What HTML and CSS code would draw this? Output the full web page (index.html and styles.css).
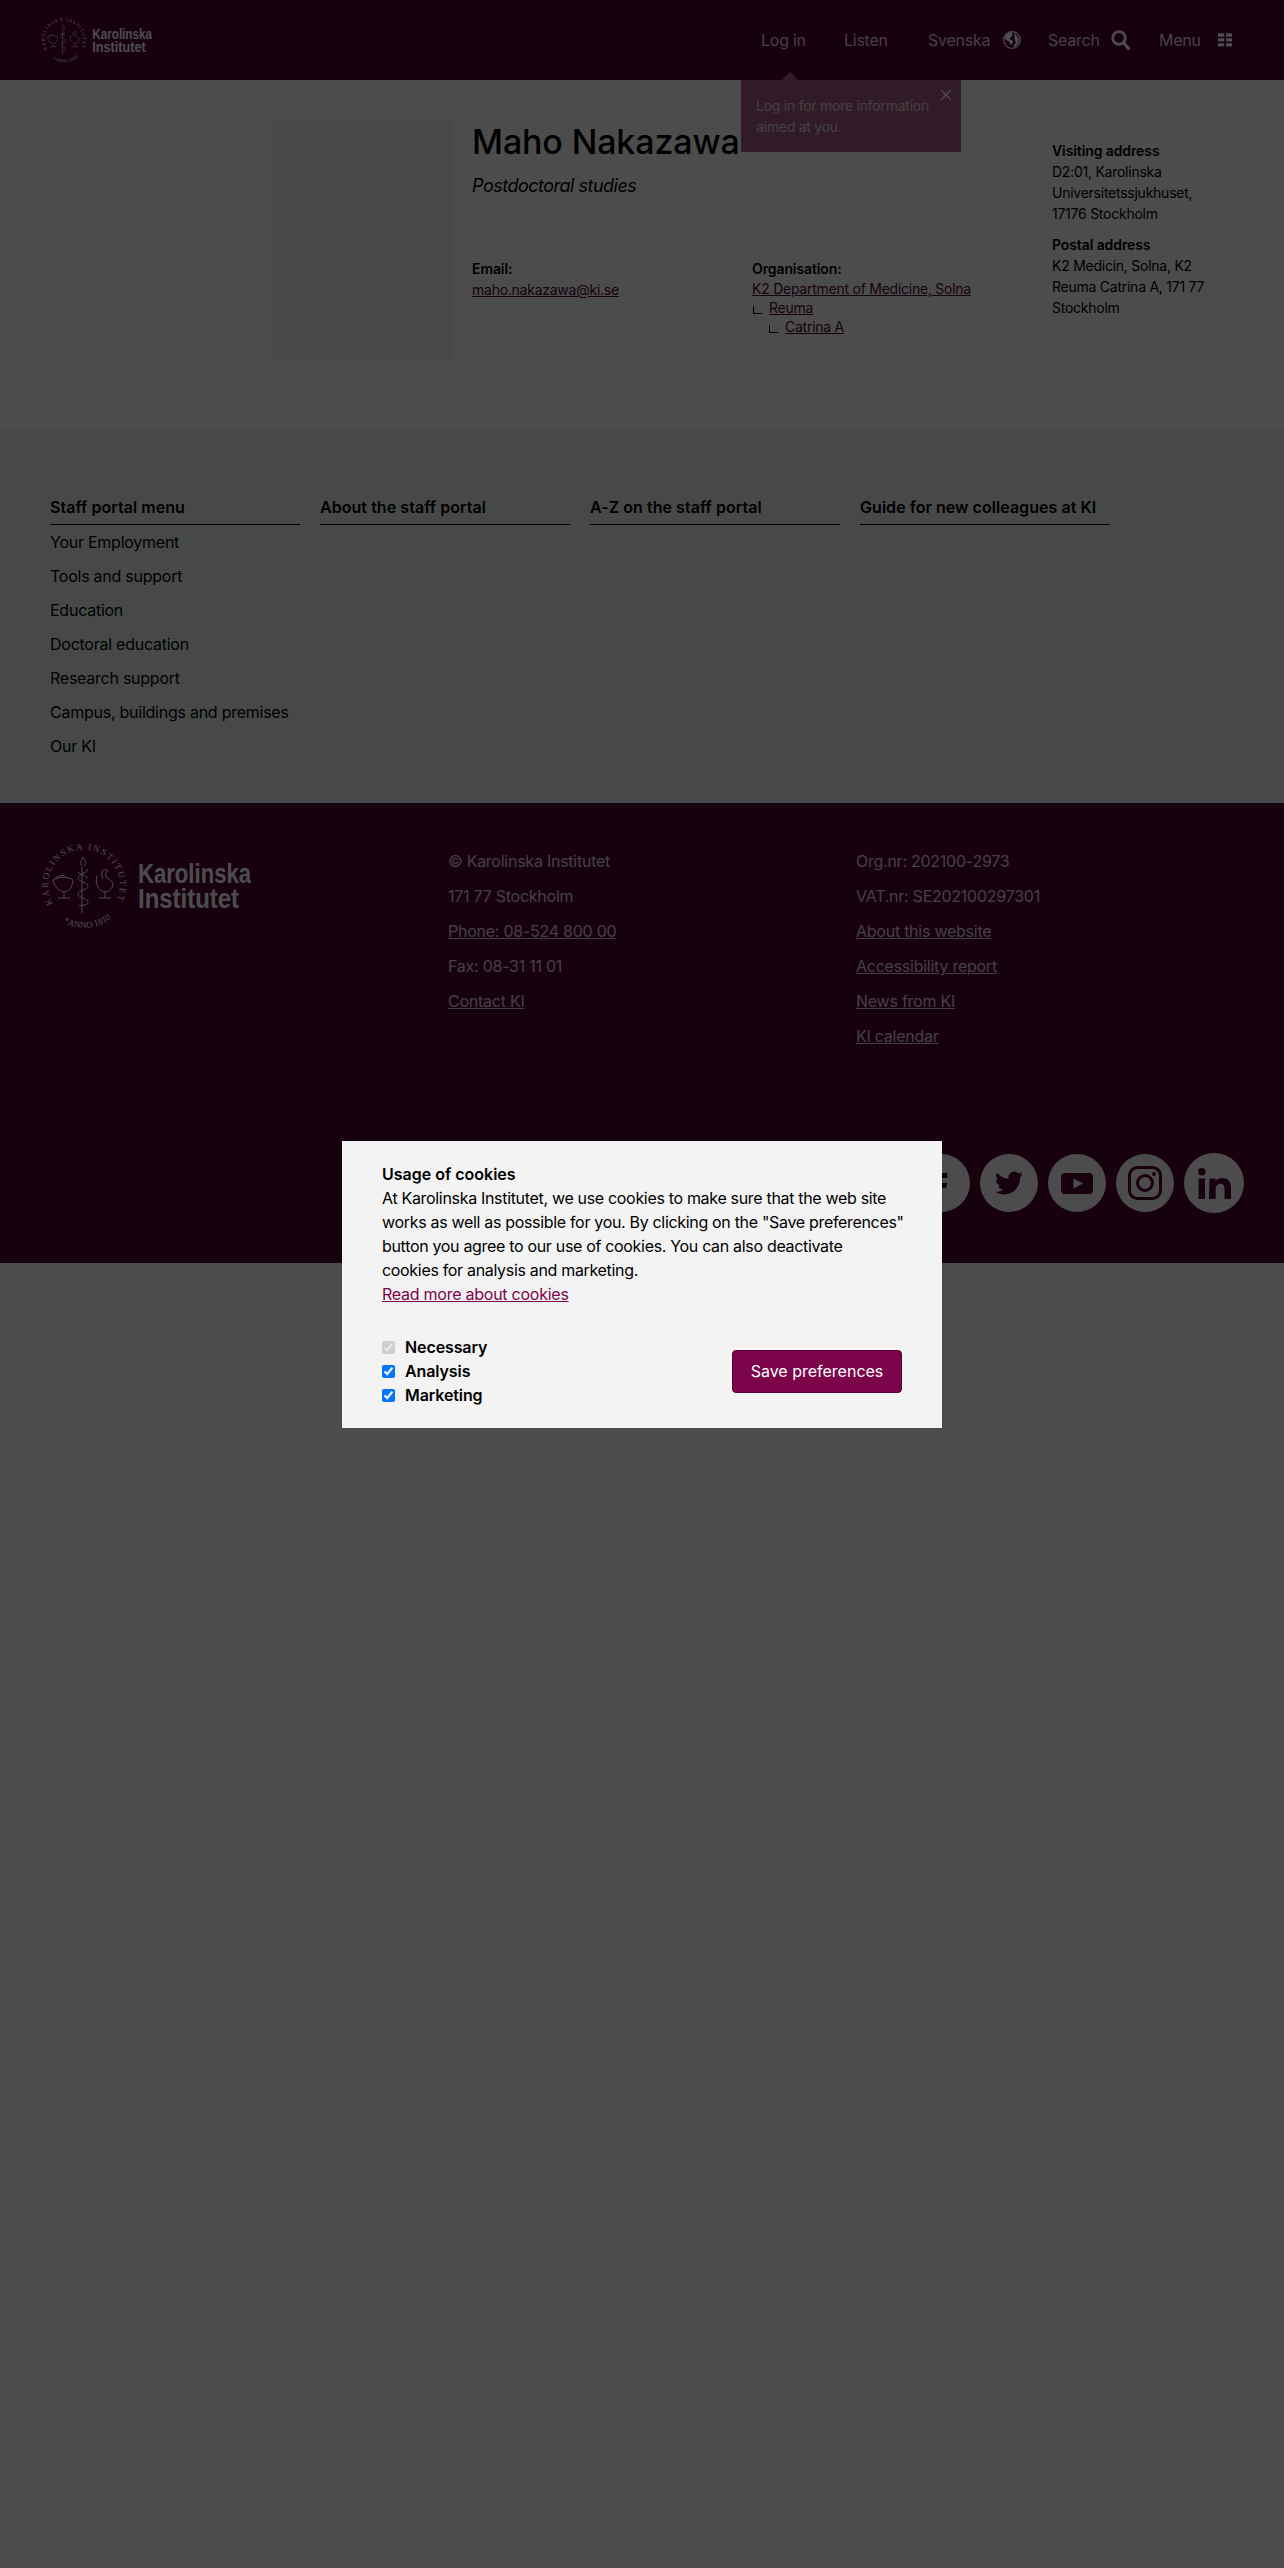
FILE: index.html
```html
<!DOCTYPE html>
<html lang="en">
<head>
<meta charset="utf-8">
<title>Maho Nakazawa</title>
<link rel="stylesheet" href="styles.css">
</head>
<body>
<svg class="defs" width="0" height="0" aria-hidden="true">
  <defs>
    <symbol id="ki-logo" viewBox="0 0 210 87">
      <path id="seal-top" d="M11.800 61.500A36 36 0 1 1 74.200 61.500" fill="none"/>
      <path id="seal-bottom" d="M15.700 76A42.500 42.500 0 0 0 70.300 76" fill="none"/>
      <text class="seal-text"><textPath href="#seal-top" textLength="146" lengthAdjust="spacing">KAROLINSKA INSTITUTET</textPath></text>
      <text class="seal-text"><textPath href="#seal-bottom" startOffset="8">*ANNO 1810*</textPath></text>
      <g class="seal-art">
        <path d="M41 71V25M41 24c-3-3 0-6 1-9 2 3 4 6 1 9"/>
        <path d="M46 27c3 3-9 5-9 9s10 4 10 8-10 4-10 8 10 4 10 8-7 3-9 4M37 30c2 3 9 3 9 6"/>
        <path d="M12 38c6-4 17-3 20 0-1 9-4 11-9 12-5-1-9-4-11-12zM23 50v6M17 56h12M14 36c3-2 6-3 10-2"/>
        <path d="M64 50v6M58 56h12M56 34c-2 8 1 15 8 16 6-1 8-5 8-9-2-3-5-4-7-6-1-2 0-5 2-6-2-2-5-2-6 1-1 3 0 5 1 7"/>
      </g>
      <text class="word" x="97" y="41" textLength="113" lengthAdjust="spacingAndGlyphs">Karolinska</text>
      <text class="word" x="97" y="66" textLength="101" lengthAdjust="spacingAndGlyphs">Institutet</text>
    </symbol>
  </defs>
</svg>

<header class="site-header">
  <svg class="logo-small"><use href="#ki-logo"/></svg>
  <nav class="top-nav">
    <a class="nav-item">Log in</a>
    <a class="nav-item">Listen</a>
    <a class="nav-item nav-gap-globe">Svenska
      <svg class="icon-globe" viewBox="0 0 18 18"><circle cx="9" cy="9" r="8.300" fill="none" stroke="#fff" stroke-width="1.200"/><path fill="#fff" d="M9 1C5 1.500 2 4 1.500 7c1 2 3 2.500 4.500 3.500 1 1 1 2.500 1.500 3.500 1.500-.5 2-2 2.500-3 .5-1.500-1.500-2-3-2.500-.5-1-.5-1.500 .5-2 1-1 1.500-2 2-3 0-1-.2-2-.5-2.500zM11.500 1.500c.5 1.500 1.500 2 2.500 3.500l2 3c0 3-1 5-3 7-1 .5-1.500 1-2.500 1.500-.5-1.500 1-3 2-4 .5-2-1-3.500-1-5.500 0-2-.5-4 0-5.500z"/></svg>
    </a>
    <a class="nav-item nav-gap-search">Search
      <svg class="icon-search" viewBox="0 0 19 20"><circle cx="8" cy="8" r="6.300" fill="none" stroke="#fff" stroke-width="2.800"/><path d="M12.500 12.500l5 6" stroke="#fff" stroke-width="3.200" stroke-linecap="round"/></svg>
    </a>
    <a class="nav-item nav-gap-menu">Menu
      <svg class="icon-menu" viewBox="0 0 15 14"><path fill="#fff" d="M0 0h6.500v3.500H0zM8.500 0H15v3.500H8.500zM0 5.200h6.500v3.500H0zM8.500 5.200H15v3.500H8.500zM0 10.400h6.500v3.500H0zM8.500 10.400H15v3.500H8.500z"/></svg>
    </a>
  </nav>
  <div class="login-tip">
    <span class="tip-arrow"></span>
    <svg class="tip-close" viewBox="0 0 12 12"><path d="M1 1l10 10M11 1L1 11" stroke="#fff" stroke-width="1.300"/></svg>
    Log in for more information<br>aimed at you.
  </div>
</header>

<main class="profile">
  <div class="photo"></div>
  <div class="person">
    <h1 class="name">Maho Nakazawa</h1>
    <p class="role">Postdoctoral studies</p>
    <div class="facts">
      <div class="fact-email">
        <div class="label">Email:</div>
        <a class="plum-link" href="#">maho.nakazawa@ki.se</a>
      </div>
      <div class="fact-org">
        <div class="label">Organisation:</div>
        <div class="org-line"><a class="plum-link" href="#">K2 Department of Medicine, Solna</a></div>
        <div class="org-line"><span class="tree"></span><a class="plum-link" href="#">Reuma</a></div>
        <div class="org-line org-deep"><span class="tree"></span><a class="plum-link" href="#">Catrina A</a></div>
      </div>
    </div>
  </div>
  <aside class="addresses">
    <div class="label">Visiting address</div>
    <p class="address">D2:01, Karolinska<br>Universitetssjukhuset,<br>17176 Stockholm</p>
    <div class="label">Postal address</div>
    <p class="address">K2 Medicin, Solna, K2<br>Reuma Catrina A, 171 77<br>Stockholm</p>
  </aside>
</main>

<section class="portal-links">
  <div class="portal-col">
    <h2 class="portal-title">Staff portal menu</h2>
    <ul class="portal-list">
      <li>Your Employment</li>
      <li>Tools and support</li>
      <li>Education</li>
      <li>Doctoral education</li>
      <li>Research support</li>
      <li>Campus, buildings and premises</li>
      <li>Our KI</li>
    </ul>
  </div>
  <div class="portal-col"><h2 class="portal-title">About the staff portal</h2></div>
  <div class="portal-col"><h2 class="portal-title">A-Z on the staff portal</h2></div>
  <div class="portal-col"><h2 class="portal-title">Guide for new colleagues at KI</h2></div>
</section>

<footer class="site-footer">
  <div class="footer-grid">
    <svg class="logo-large"><use href="#ki-logo"/></svg>
    <ul class="footer-list">
      <li>© Karolinska Institutet</li>
      <li>171 77 Stockholm</li>
      <li><a href="#">Phone: 08-524 800 00</a></li>
      <li>Fax: 08-31 11 01</li>
      <li><a href="#">Contact KI</a></li>
    </ul>
    <ul class="footer-list">
      <li>Org.nr: 202100-2973</li>
      <li>VAT.nr: SE202100297301</li>
      <li><a href="#">About this website</a></li>
      <li><a href="#">Accessibility report</a></li>
      <li><a href="#">News from KI</a></li>
      <li><a href="#">KI calendar</a></li>
    </ul>
  </div>
  <div class="social">
    <span class="social-disc"><svg class="icon-fb" viewBox="0 0 24 24"><path d="M14 8h3V4h-3c-3 0-5 2-5 5v3H6v4h3v8h4v-8h3l1-4h-4V9c0-.6.4-1 1-1z"/></svg></span>
    <span class="social-disc"><svg class="icon-tw" viewBox="0 0 24 24"><path d="M23.953 4.57a10 10 0 01-2.825.775 4.958 4.958 0 002.163-2.723c-.951.555-2.005.959-3.127 1.184a4.92 4.92 0 00-8.384 4.482C7.69 8.095 4.067 6.13 1.64 3.162a4.822 4.822 0 00-.666 2.475c0 1.71.87 3.213 2.188 4.096a4.904 4.904 0 01-2.228-.616v.06a4.923 4.923 0 003.946 4.827 4.996 4.996 0 01-2.212.085 4.936 4.936 0 004.604 3.417 9.867 9.867 0 01-6.102 2.105c-.39 0-.779-.023-1.17-.067a13.995 13.995 0 007.557 2.209c9.053 0 13.998-7.496 13.998-13.985 0-.21 0-.42-.015-.63A9.935 9.935 0 0024 4.59z"/></svg></span>
    <span class="social-disc"><svg class="icon-yt" viewBox="0 0 32 21"><path fill-rule="evenodd" d="M4 0h24a4 4 0 014 4v13a4 4 0 01-4 4H4a4 4 0 01-4-4V4a4 4 0 014-4zM12.500 5.500v10l9.500-5z"/></svg></span>
    <span class="social-disc"><svg class="icon-ig" viewBox="0 0 34 34"><rect x="1.500" y="1.500" width="31" height="31" rx="8" fill="none" stroke-width="3"/><circle cx="17" cy="17" r="7.500" fill="none" stroke-width="3"/><circle class="ig-dot" cx="26" cy="8" r="2"/></svg></span>
    <span class="social-disc social-disc-wide"><svg class="icon-in" viewBox="0 0 33 31"><circle cx="3.800" cy="3.800" r="3.800"/><path d="M.6 10.500h6.400V31H.6zM11.500 10.500h6v2.800c1-1.800 3.300-3.300 6.500-3.300 6.500 0 9 3.800 9 10.300V31h-6.500V21.200c0-2.700-.7-5.400-3.800-5.400s-5 2.300-5 5.500V31h-6.700z"/></svg></span>
  </div>
</footer>

<div class="overlay"></div>

<div class="cookie-modal">
  <strong class="cookie-title">Usage of cookies</strong>
  <p class="cookie-text">At Karolinska Institutet, we use cookies to make sure that the web site<br>works as well as possible for you. By clicking on the "Save preferences"<br>button you agree to our use of cookies. You can also deactivate<br>cookies for analysis and marketing.</p>
  <a class="cookie-more" href="#">Read more about cookies</a>
  <div class="cookie-controls">
    <div class="cookie-options">
      <label class="cookie-option"><input type="checkbox" checked disabled>Necessary</label>
      <label class="cookie-option"><input type="checkbox" checked>Analysis</label>
      <label class="cookie-option"><input type="checkbox" checked>Marketing</label>
    </div>
    <button class="save-btn" type="button">Save preferences</button>
  </div>
</div>
</body>
</html>
```
FILE: styles.css
```css
* { box-sizing: border-box; }
html, body { margin: 0; padding: 0; }
body {
  min-height: 2568px;
  background: #fff;
  color: #000;
  font-family: Inter, "Noto Sans", sans-serif;
  font-size: 16px;
  line-height: 24px;
  letter-spacing: -.25px;
  position: relative;
}
a { color: inherit; }
ul { list-style: none; margin: 0; padding: 0; }
p { margin: 0; }
.defs { position: absolute; }
.seal-text { font-family: "Liberation Serif", serif; font-size: 9px; letter-spacing: 0; fill: #fff; }
.seal-art { fill: none; stroke: #fff; stroke-width: 1; }
.word { font-family: "Liberation Sans Narrow", "Liberation Sans", sans-serif; font-weight: 700; font-size: 28px; letter-spacing: 0; fill: #fff; }

.site-header {
  position: relative;
  height: 80px;
  background: #4f0433;
  color: #fff;
  display: flex;
  align-items: center;
  padding: 0 52px 0 41px;
}
.logo-small { width: 111px; height: 46px; }
.top-nav {
  margin-left: auto;
  display: grid;
  grid-template-columns: 83px 84px 120px 111px 73px;
}
.nav-item { display: flex; align-items: center; white-space: nowrap; color: rgba(255, 255, 255, .85); }
.nav-gap-globe { gap: 13px; }
.nav-gap-search { gap: 11px; }
.nav-gap-menu { gap: 17px; }
.icon-globe { width: 18px; height: 18px; }
.icon-search { width: 19px; height: 20px; }
.icon-menu { width: 15px; height: 14px; }
.login-tip {
  position: absolute;
  top: 80px;
  left: 741px;
  width: 220px;
  height: 72px;
  padding: 15px;
  background: #a05d7f;
  color: rgba(255, 255, 255, .75);
  font-size: 14px;
  line-height: 21px;
  z-index: 2;
}
.tip-arrow {
  position: absolute;
  top: -8px;
  left: 41px;
  border-left: 8px solid transparent;
  border-right: 8px solid transparent;
  border-bottom: 8px solid #a05d7f;
}
.tip-close { position: absolute; top: 9px; right: 9px; width: 12px; height: 12px; }

.profile {
  height: 350px;
  padding: 40px 0 0 272px;
  display: grid;
  grid-template-columns: 180px 560px 180px;
  column-gap: 20px;
  align-items: start;
}
.photo { height: 240px; background: #f1f1f1; }
.name { margin: -2px 0 0; font-size: 34px; line-height: 48px; font-weight: 500; letter-spacing: -.15px; white-space: nowrap; }
.role { margin-top: 6px; font-size: 18px; line-height: 27px; font-style: italic; letter-spacing: -.5px; }
.facts { margin-top: 59px; display: grid; grid-template-columns: 280px 280px; font-size: 14px; line-height: 21px; }
.label { font-size: 14px; line-height: 21px; font-weight: 600; letter-spacing: -.1px; }
.plum-link { color: #4f0433; }
.org-line { line-height: 19px; display: flex; align-items: center; }
.org-deep { padding-left: 16px; }
.tree {
  width: 9px;
  height: 8px;
  margin: 4px 7px 0 1px;
  border-left: 1px solid #000;
  border-bottom: 1px solid #000;
}
.addresses { margin-top: 20px; font-size: 14px; line-height: 21px; }
.address { margin-bottom: 10px; }

.portal-links {
  height: 373px;
  background: #edf4f4;
  padding: 65px 0 0 50px;
  display: grid;
  grid-template-columns: repeat(4, 250px);
  column-gap: 20px;
  align-items: start;
}
.portal-title {
  margin: 0;
  font-size: 16px;
  line-height: 24px;
  font-weight: 600;
  letter-spacing: .05px;
  padding-bottom: 5px;
  border-bottom: 1px solid #000;
}
.portal-list li { line-height: 34px; }

.site-footer {
  height: 460px;
  background: #4f0433;
  color: rgba(255, 255, 255, .85);
  padding: 39px 40px 0 41px;
}
.footer-grid { display: grid; grid-template-columns: 407px 408px 1fr; }
.logo-large { width: 210px; height: 87px; }
.footer-list { padding-top: 7px; }
.footer-list li { line-height: 24px; margin-bottom: 11px; }
.social {
  margin-top: 94px;
  display: flex;
  justify-content: flex-end;
  align-items: center;
  gap: 10px;
}
.social-disc {
  width: 58px;
  height: 58px;
  border-radius: 50%;
  background: #fff;
  display: flex;
  align-items: center;
  justify-content: center;
  fill: #4f0433;
  stroke: #4f0433;
  stroke-width: 0;
}
.social-disc-wide { width: 60px; height: 60px; }
.icon-fb { width: 30px; height: 30px; }
.icon-tw { width: 28px; height: 28px; }
.icon-yt { width: 32px; height: 21px; }
.icon-ig { width: 34px; height: 34px; }
.ig-dot { stroke: none; }
.icon-in { width: 33px; height: 31px; }

.overlay {
  position: fixed;
  inset: 0;
  background: rgba(0, 0, 0, .7);
  z-index: 10;
}
.cookie-modal {
  position: fixed;
  left: 342px;
  top: 1141px;
  width: 600px;
  height: 287px;
  padding: 21px 40px;
  background: #f3f3f3;
  color: #000;
  z-index: 11;
}
.cookie-title { display: block; font-weight: 600; letter-spacing: 0; }
.cookie-text { white-space: nowrap; letter-spacing: -.32px; }
.cookie-more { color: #7c044a; }
.cookie-controls {
  margin-top: 29px;
  display: flex;
  justify-content: space-between;
  align-items: center;
}
.cookie-option { display: flex; align-items: center; font-weight: 600; letter-spacing: -.1px; height: 24px; }
.cookie-option input { margin: 0 10px 0 0; width: 13px; height: 13px; }
.save-btn {
  width: 170px;
  height: 43px;
  background: #7c044a;
  color: #fff;
  border: 1px solid #5a0037;
  border-radius: 4px;
  font: inherit;
}
```
